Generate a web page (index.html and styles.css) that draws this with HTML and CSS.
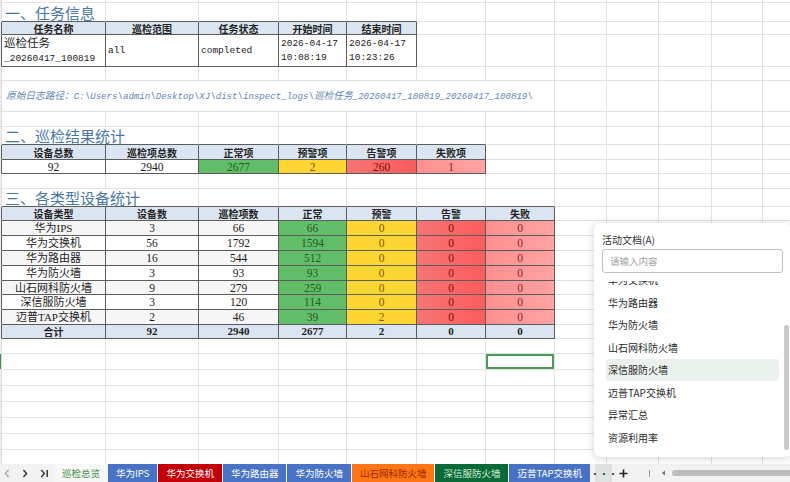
FILE: index.html
```html
<!DOCTYPE html>
<html lang="zh-CN">
<head>
<meta charset="utf-8">
<title>巡检总览</title>
<link rel="stylesheet" href="styles.css">
</head>
<body>
<div class="app">
  <div class="sheet">
    <table class="grid">
      <colgroup>
        <col class="w0"><col class="w1"><col class="w2"><col class="w3"><col class="w4"><col class="w5"><col class="w6"><col class="w7"><col class="w8"><col class="w9"><col class="w10"><col class="w11"><col class="w12">
      </colgroup>
      <tr class="h3"><td class="c0"></td><td></td><td></td><td></td><td></td><td></td><td></td><td></td><td></td><td></td><td></td><td></td><td></td></tr>
      <tr class="h19"><td class="c0"></td><td class="title tb">一、任务信息</td><td class="tb"></td><td class="tb"></td><td class="tb"></td><td class="tb"></td><td></td><td></td><td></td><td></td><td></td><td></td><td></td></tr>
      <tr class="h13"><td class="c0 el"></td><td class="th">任务名称</td><td class="th">巡检范围</td><td class="th">任务状态</td><td class="th">开始时间</td><td class="th">结束时间</td><td></td><td></td><td></td><td></td><td></td><td></td><td></td></tr>
      <tr class="h30"><td class="c0 el"></td><td class="bx mono"><span class="cj">巡检任务</span><br>_20260417_100819</td><td class="bx mono">all</td><td class="bx mono">completed</td><td class="bx mono">2026-04-17<br>10:08:19</td><td class="bx mono">2026-04-17<br>10:23:26</td><td></td><td></td><td></td><td></td><td></td><td></td><td></td></tr>
      <tr class="h14"><td class="c0"></td><td></td><td></td><td></td><td></td><td></td><td></td><td></td><td></td><td></td><td></td><td></td><td></td></tr>
      <tr class="h31"><td class="c0"></td><td class="path" colspan="7"><span class="pcj">原始日志路径：</span>C:\Users\admin\Desktop\XJ\dist\inspect_logs\<span class="pcj">巡检任务</span>_20260417_100819_20260417_100819\</td><td></td><td></td><td></td><td></td><td></td></tr>
      <tr class="h15"><td class="c0"></td><td></td><td></td><td></td><td></td><td></td><td></td><td></td><td></td><td></td><td></td><td></td><td></td></tr>
      <tr class="h18"><td class="c0"></td><td class="title tb" colspan="2">二、巡检结果统计</td><td class="tb"></td><td class="tb"></td><td class="tb"></td><td class="tb"></td><td></td><td></td><td></td><td></td><td></td><td></td></tr>
      <tr class="h15"><td class="c0 el"></td><td class="th">设备总数</td><td class="th">巡检项总数</td><td class="th">正常项</td><td class="th">预警项</td><td class="th">告警项</td><td class="th">失败项</td><td></td><td></td><td></td><td></td><td></td><td></td></tr>
      <tr class="h14"><td class="c0 el"></td><td class="bx num">92</td><td class="bx num">2940</td><td class="bx num ok">2677</td><td class="bx num warn">2</td><td class="bx num alarm">260</td><td class="bx num fail">1</td><td></td><td></td><td></td><td></td><td></td><td></td></tr>
      <tr class="h15"><td class="c0"></td><td></td><td></td><td></td><td></td><td></td><td></td><td></td><td></td><td></td><td></td><td></td><td></td></tr>
      <tr class="h18"><td class="c0"></td><td class="title tb" colspan="2">三、各类型设备统计</td><td class="tb"></td><td class="tb"></td><td class="tb"></td><td class="tb"></td><td class="tb"></td><td></td><td></td><td></td><td></td><td></td></tr>
      <tr class="h14"><td class="c0 el"></td><td class="th">设备类型</td><td class="th">设备数</td><td class="th">巡检项数</td><td class="th">正常</td><td class="th">预警</td><td class="th">告警</td><td class="th">失败</td><td></td><td></td><td></td><td></td><td></td></tr>
      <tr class="h15 odd"><td class="c0 el"></td><td class="bx nm">华为IPS</td><td class="bx num">3</td><td class="bx num">66</td><td class="bx num ok">66</td><td class="bx num warn">0</td><td class="bx num alarm">0</td><td class="bx num fail">0</td><td></td><td></td><td></td><td></td><td></td></tr>
      <tr class="h15"><td class="c0 el"></td><td class="bx nm">华为交换机</td><td class="bx num">56</td><td class="bx num">1792</td><td class="bx num ok">1594</td><td class="bx num warn">0</td><td class="bx num alarm">0</td><td class="bx num fail">0</td><td></td><td></td><td></td><td></td><td></td></tr>
      <tr class="h15 odd"><td class="c0 el"></td><td class="bx nm">华为路由器</td><td class="bx num">16</td><td class="bx num">544</td><td class="bx num ok">512</td><td class="bx num warn">0</td><td class="bx num alarm">0</td><td class="bx num fail">0</td><td></td><td></td><td></td><td></td><td></td></tr>
      <tr class="h15"><td class="c0 el"></td><td class="bx nm">华为防火墙</td><td class="bx num">3</td><td class="bx num">93</td><td class="bx num ok">93</td><td class="bx num warn">0</td><td class="bx num alarm">0</td><td class="bx num fail">0</td><td></td><td></td><td></td><td></td><td></td></tr>
      <tr class="h14 odd"><td class="c0 el"></td><td class="bx nm">山石网科防火墙</td><td class="bx num">9</td><td class="bx num">279</td><td class="bx num ok">259</td><td class="bx num warn">0</td><td class="bx num alarm">0</td><td class="bx num fail">0</td><td></td><td></td><td></td><td></td><td></td></tr>
      <tr class="h15"><td class="c0 el"></td><td class="bx nm">深信服防火墙</td><td class="bx num">3</td><td class="bx num">120</td><td class="bx num ok">114</td><td class="bx num warn">0</td><td class="bx num alarm">0</td><td class="bx num fail">0</td><td></td><td></td><td></td><td></td><td></td></tr>
      <tr class="h15 odd"><td class="c0 el"></td><td class="bx nm">迈普TAP交换机</td><td class="bx num">2</td><td class="bx num">46</td><td class="bx num ok">39</td><td class="bx num warn">2</td><td class="bx num alarm">0</td><td class="bx num fail">0</td><td></td><td></td><td></td><td></td><td></td></tr>
      <tr class="h14"><td class="c0 el"></td><td class="th">合计</td><td class="th tnum">92</td><td class="th tnum">2940</td><td class="th tnum">2677</td><td class="th tnum">2</td><td class="th tnum">0</td><td class="th tnum">0</td><td></td><td></td><td></td><td></td><td></td></tr>
      <tr class="h15"><td class="c0"></td><td></td><td></td><td></td><td></td><td></td><td></td><td></td><td></td><td></td><td></td><td></td><td></td></tr>
      <tr class="h16"><td class="c0 rowsel"></td><td></td><td></td><td></td><td></td><td></td><td></td><td class="sel"></td><td></td><td></td><td></td><td></td><td></td></tr>
      <tr class="h16"><td class="c0"></td><td></td><td></td><td></td><td></td><td></td><td></td><td></td><td></td><td></td><td></td><td></td><td></td></tr>
      <tr class="h16"><td class="c0"></td><td></td><td></td><td></td><td></td><td></td><td></td><td></td><td></td><td></td><td></td><td></td><td></td></tr>
      <tr class="h16"><td class="c0"></td><td></td><td></td><td></td><td></td><td></td><td></td><td></td><td></td><td></td><td></td><td></td><td></td></tr>
      <tr class="h16"><td class="c0"></td><td></td><td></td><td></td><td></td><td></td><td></td><td></td><td></td><td></td><td></td><td></td><td></td></tr>
      <tr class="h16"><td class="c0"></td><td></td><td></td><td></td><td></td><td></td><td></td><td></td><td></td><td></td><td></td><td></td><td></td></tr>
      <tr class="h16"><td class="c0"></td><td></td><td></td><td></td><td></td><td></td><td></td><td></td><td></td><td></td><td></td><td></td><td></td></tr>
    </table>
  </div>

  <div class="tabbar">
    <div class="nav">
      <svg class="navi" width="6" height="9" viewBox="0 0 6 9"><path d="M4.6 1 L1.4 4.5 L4.6 8" fill="none" stroke="#a8a8a8" stroke-width="1.3"/></svg>
      <svg class="navi" width="6" height="9" viewBox="0 0 6 9"><path d="M1.4 1 L4.6 4.5 L1.4 8" fill="none" stroke="#333" stroke-width="1.4"/></svg>
      <svg class="navi" width="9" height="9" viewBox="0 0 9 9"><path d="M1.2 1 L4.4 4.5 L1.2 8" fill="none" stroke="#333" stroke-width="1.4"/><path d="M7.2 1 V8" stroke="#333" stroke-width="1.5"/></svg>
    </div>
    <div class="tab active">巡检总览</div>
    <div class="tab blue">华为IPS</div>
    <div class="tab red">华为交换机</div>
    <div class="tab blue">华为路由器</div>
    <div class="tab blue">华为防火墙</div>
    <div class="tab orange">山石网科防火墙</div>
    <div class="tab dgreen">深信服防火墙</div>
    <div class="tab blue">迈普TAP交换机</div>
    <div class="more">···</div>
    <svg class="plus" width="9" height="9" viewBox="0 0 9 9"><path d="M4.5 0.5 V8.5 M0.5 4.5 H8.5" stroke="#222" stroke-width="1.6"/></svg>
    <div class="vsep"></div>
    <svg class="left" width="5" height="6" viewBox="0 0 5 6"><path d="M4 0.5 L0.8 3 L4 5.5 Z" fill="#777"/></svg>
    <div class="thumb"></div>
  </div>

  <div class="popup">
    <div class="ptitle">活动文档(A)</div>
    <div class="search">请输入内容</div>
    <div class="listview">
      <ul class="list">
        <li>华为交换机</li>
        <li>华为路由器</li>
        <li>华为防火墙</li>
        <li>山石网科防火墙</li>
        <li class="hl">深信服防火墙</li>
        <li>迈普TAP交换机</li>
        <li>异常汇总</li>
        <li>资源利用率</li>
      </ul>
    </div>
    <div class="pscroll"></div>
  </div>
</div>
</body>
</html>
```

FILE: styles.css
```css
* { box-sizing: border-box; }
html, body { margin: 0; padding: 0; background: #ffffff; }
body { font-family: "Liberation Serif", "Noto Sans CJK SC", serif; color: #1a1a1a; }

.app { position: relative; width: 790px; height: 482px; overflow: hidden; display: flex; flex-direction: column; }
.sheet { height: 464px; overflow: hidden; flex: none; }

.grid { table-layout: fixed; border-collapse: separate; border-spacing: 0; width: 815px; font-size: 11px; line-height: 12px; }
.w0 { width: 2px; } .w1 { width: 104px; } .w2 { width: 93px; } .w3 { width: 80px; } .w4 { width: 68px; }
.w5 { width: 70px; } .w6 { width: 69px; } .w7 { width: 69px; } .w8 { width: 52px; } .w9 { width: 52px; }
.w10 { width: 53px; } .w11 { width: 51px; } .w12 { width: 52px; }

.h3 { height: 3px; } .h13 { height: 13px; } .h14 { height: 14px; } .h15 { height: 15px; } .h16 { height: 16px; }
.h18 { height: 18px; } .h19 { height: 19px; } .h30 { height: 30px; } .h31 { height: 31px; }

.grid td { padding: 0; border-right: 1px solid #e2e2e2; border-bottom: 1px solid #e2e2e2; white-space: nowrap; overflow: visible; vertical-align: middle; }
.grid td.c0 { background: #eeeeee; border-right-color: #dcdcdc; }
.grid td.rowsel { background: #3f8f52; }
.grid td.el { border-right-color: #5c5c5c; }
.grid td.tb { border-bottom-color: #5c5c5c; }
.grid td.bx { border-right-color: #5c5c5c; border-bottom-color: #5c5c5c; }
.grid td.th { background: #dbe5f1; border-right-color: #5c5c5c; border-bottom-color: #5c5c5c; text-align: center; font-family: "Noto Sans CJK SC", sans-serif; font-weight: 700; font-size: 10px; line-height: 11px; color: #222; }
.grid td.tnum { font-family: "Liberation Serif", serif; font-size: 11px; }

.title { font-family: "Noto Sans CJK SC", sans-serif; font-size: 15px; line-height: 15px; color: #4a76a6; padding-left: 3px !important; padding-bottom: 1px !important; vertical-align: bottom !important; }

.mono { font-family: "Liberation Mono", "Noto Sans CJK SC", monospace; font-size: 9.5px; line-height: 14px; padding-left: 2px !important; color: #222; }
.cj { font-family: "Noto Sans CJK SC", sans-serif; font-size: 11.5px; }

.path { font-family: "Liberation Mono", "Noto Sans CJK SC", monospace; font-style: italic; font-size: 9.1px; color: #5f86b6; padding-left: 4px !important; }
.pcj { font-family: "Noto Sans CJK SC", sans-serif; font-size: 9.7px; }

.num { text-align: center; font-size: 11.5px; }
.nm { text-align: center; font-family: "Liberation Serif", "Noto Sans CJK SC", serif; font-size: 11px; }
.odd td.nm, .odd td.bx.num:not(.ok):not(.warn):not(.alarm):not(.fail) { background: #f6f6f6; }

.grid td.ok { background: #62bd69; color: #1d5c22; }
.grid td.warn { background: #fdd634; color: #7a5a00; }
.grid td.alarm { background: linear-gradient(90deg, #f77474, #fb5c5c); color: #7e0c0c; }
.grid td.fail { background: linear-gradient(90deg, #ff8f8f, #ffa3a3); color: #8f1d1d; }

.grid td.sel { box-shadow: inset 0 0 0 2px #4b9a5c; }

/* tab bar */
.tabbar { height: 18px; flex: none; display: flex; align-items: stretch; background: #f1f2f1; font-family: "Noto Sans CJK SC", sans-serif; font-size: 9.5px; }
.nav { width: 55px; display: flex; align-items: center; padding-left: 4px; gap: 12px; }
.navi { display: block; }
.tab { display: flex; align-items: center; padding: 0 8px; margin-right: 1px; color: #ffffff; white-space: nowrap; }
.tab.active { color: #3e8e3e; background: #f6f7f6; padding: 0 7px; }
.tab.blue { background: #4873c4; }
.tab.blue:first-of-type { padding: 0 9px; }
.tab.red { background: #c20007; }
.tab.orange { background: #fe7515; color: #9c2a00; }
.tab.dgreen { background: #0a6a38; color: #d6ecd8; }
.more { margin-left: 4px; width: 17px; background: #dde3de; color: #333; display: flex; align-items: center; justify-content: center; font-size: 10px; letter-spacing: -1px; }
.plus { align-self: center; margin-left: 7px; }
.vsep { align-self: center; width: 1px; height: 7px; background: #9a9a9a; margin-left: 21px; }
.left { align-self: center; margin-left: 11px; }
.thumb { align-self: center; margin-left: 6px; flex: 1; height: 6px; border-radius: 3px 0 0 3px; background: #bcbcbc; }

/* popup */
.popup { position: absolute; left: 594px; top: 223px; width: 197px; height: 234px; background: #ffffff; border-radius: 6px; box-shadow: 0 1px 9px rgba(0,0,0,0.18); padding: 10px 8px 0 8px; font-family: "Noto Sans CJK SC", sans-serif; }
.ptitle { font-size: 10px; line-height: 14px; color: #333; }
.search { margin-top: 2px; height: 24px; width: 181px; border: 1px solid #b7c3bb; border-radius: 3px; font-size: 9.5px; color: #a3a3a3; padding-left: 7px; display: flex; align-items: center; }
.listview { margin-top: 8px; height: 171px; overflow: hidden; }
.list { list-style: none; margin: -12.5px 0 0 0; padding: 0; }
.list li { height: 22.5px; margin: 0 4px; padding-left: 2px; display: flex; align-items: center; font-size: 10px; color: #2a2a2a; border-radius: 3px; }
.list li.hl { background: #ebf1ed; }
.pscroll { position: absolute; left: 190px; top: 102px; width: 5px; height: 125px; border-radius: 3px; background: #cacaca; }
```
